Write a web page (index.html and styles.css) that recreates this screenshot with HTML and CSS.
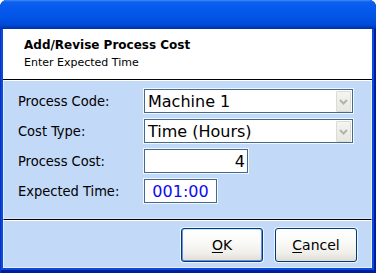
FILE: index.html
```html
<!DOCTYPE html>
<html>
<head>
<meta charset="utf-8">
<title>Add/Revise Process Cost</title>
<link rel="stylesheet" href="styles.css">
</head>
<body>
<div class="window">
  <div class="titlebar"></div>
  <div class="client">
    <div class="header">
      <div class="h-title">Add/Revise Process Cost</div>
      <div class="h-sub">Enter Expected Time</div>
    </div>
    <div class="form">
      <span class="lbl">Process Code:</span>
      <div class="field combo">
        <span class="val">Machine 1</span>
        <span class="drop"><svg width="15" height="21" viewBox="0 0 15 21"><polyline points="4,9 7.5,12.5 11,9" fill="none" stroke="#b3b3aa" stroke-width="2"/></svg></span>
      </div>
      <span class="lbl">Cost Type:</span>
      <div class="field combo">
        <span class="val">Time (Hours)</span>
        <span class="drop"><svg width="15" height="21" viewBox="0 0 15 21"><polyline points="4,9 7.5,12.5 11,9" fill="none" stroke="#b3b3aa" stroke-width="2"/></svg></span>
      </div>
      <span class="lbl">Process Cost:</span>
      <div class="field cost"><span class="val">4</span></div>
      <span class="lbl">Expected Time:</span>
      <div class="field time"><span class="val">001:00</span></div>
    </div>
    <div class="footer">
      <button class="btn btn-default"><u>O</u>K</button>
      <button class="btn"><u>C</u>ancel</button>
    </div>
  </div>
</div>
</body>
</html>
```
FILE: styles.css
```css
html, body {
  margin: 0;
  padding: 0;
  background: #ffffff;
}
body {
  width: 376px;
  height: 273px;
  overflow: hidden;
}
.window {
  width: 376px;
  height: 273px;
  box-sizing: border-box;
  display: flex;
  flex-direction: column;
  border-radius: 7px 7px 0 0;
  overflow: hidden;
  background: #0a4bd9;
  box-shadow: inset 1px 0 0 #0a32c8, inset -2px 0 0 #001c9e, inset 0 -3px 0 #001c9e;
}
.titlebar {
  height: 29px;
  flex: none;
  background: linear-gradient(to bottom, #3d8ff8 0px, #0d5fee 2px, #0459ec 10px, #0254e4 18px, #0049d6 25px, #003dc2 27px, #002fa6 29px);
}
.client {
  flex: 1;
  display: flex;
  flex-direction: column;
  margin: 0 4px 5px 3px;
  font-family: "DejaVu Sans", Verdana, sans-serif;
  color: #000;
}
.header {
  height: 51px;
  box-sizing: border-box;
  background: #ffffff;
  border-bottom: 1px solid #000;
  padding: 9px 0 0 21px;
}
.h-title {
  font-weight: bold;
  font-size: 12px;
  line-height: 14px;
}
.h-sub {
  margin-top: 4px;
  font-size: 11px;
  line-height: 13px;
}
.form {
  display: grid;
  grid-template-columns: 126px auto;
  grid-auto-rows: 24px;
  row-gap: 6px;
  justify-items: start;
  align-items: center;
  padding: 8px 0 15px 14px;
  background: #c3d9f8;
  border-top: 1px solid #ffffff;
  border-left: 1px solid #e3edfb;
  border-right: 1px solid #e3edfb;
  border-bottom: 1px solid #dbe8fa;
}
.lbl {
  font-family: "DejaVu Sans Condensed", "Liberation Sans", sans-serif;
  font-size: 14.5px;
  line-height: 17px;
}
.field {
  height: 24px;
  box-sizing: border-box;
  border: 1px solid #44698f;
  background: #ffffff;
  box-shadow: 0 0 0 1px #f2f7fe;
  display: flex;
  align-items: center;
  font-size: 16px;
  line-height: 19px;
}
.combo {
  width: 209px;
  padding-left: 3px;
}
.combo .val {
  flex: 1;
}
.drop {
  width: 15px;
  height: 21px;
  margin-right: 1px;
  box-sizing: border-box;
  background: linear-gradient(to bottom, #f4f4f0, #e8e8e2);
  border: 1px solid #dcdcd4;
  border-radius: 1px;
  display: flex;
}
.drop svg {
  display: block;
  margin: -1px;
}
.cost {
  width: 104px;
  justify-content: flex-end;
  padding-right: 2px;
}
.time {
  width: 73px;
  justify-content: center;
  color: #0b0bf0;
}
.footer {
  flex: 1;
  display: flex;
  justify-content: flex-end;
  align-items: flex-start;
  gap: 12px;
  padding: 8px 14px 0 0;
  background: #c3d9f8;
  border-top: 1px solid #000;
  box-shadow: inset 0 1px 0 #ffffff;
  border-left: 1px solid #e3edfb;
  border-right: 1px solid #e3edfb;
  border-bottom: 1px solid #e3edfb;
}
.btn {
  width: 82px;
  height: 34px;
  box-sizing: border-box;
  padding: 0;
  margin: 0;
  border: 1px solid #003c74;
  border-radius: 3px;
  background: linear-gradient(to bottom, #ffffff 0%, #fbfbf9 35%, #f0efea 75%, #e0dcd2 100%);
  box-shadow: 0 0 0 1px #eef4fd;
  font-family: "DejaVu Sans", Verdana, sans-serif;
  font-size: 14px;
  color: #000;
}
.btn u {
  text-decoration: underline;
  text-underline-offset: 2px;
}
.btn-default {
  box-shadow: 0 0 0 1px #eef4fd, inset 1px 0 0 #6a8fe6, inset -1px 0 0 #6a8fe6, inset 0 -1px 0 #6a8fe6, inset 0 1px 0 #cfe0fb;
}
```
